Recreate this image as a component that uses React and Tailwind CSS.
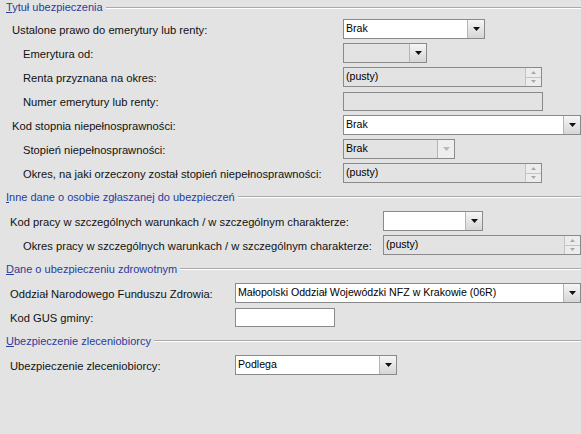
import React from "react";

const font = { fontFamily: '"Liberation Sans", Arial, sans-serif' };

function Section({ title, first }) {
  return (
    <div className={`flex items-center pl-[6px] ${first ? "h-[15px] mb-[2px]" : "h-6"}`}>
      <span className="text-[11px] text-[#2a3c9c] leading-none whitespace-nowrap">
        <span className="underline">{title[0]}</span>
        {title.slice(1)}
      </span>
      <div className="flex-1 ml-[3px] border-t border-[#a9a9a9] border-b border-b-white" />
    </div>
  );
}

function Arrow({ disabled }) {
  return (
    <svg width="7" height="4" viewBox="0 0 7 4">
      <path d="M0 0h7L3.5 4z" fill={disabled ? "#b8b8b8" : "#111"} />
    </svg>
  );
}

function Combo({ value, w, white = true, disabled, btnDisabled }) {
  return (
    <div
      className={`flex h-[20px] border border-[#8a8a8a] ${white ? "bg-white" : "bg-[#e3e3e3]"}`}
      style={{ width: w }}
    >
      <div className="flex-1 flex items-center pl-[2px] text-[10.6px] text-black whitespace-nowrap overflow-hidden">
        {value}
      </div>
      <div
        className={`w-[17px] flex items-center justify-center border-l border-[#b5b5b5] ${
          btnDisabled ? "bg-[#eeeeee]" : "bg-gradient-to-b from-[#f6f6f6] to-[#d6d6d6]"
        }`}
      >
        <Arrow disabled={btnDisabled || disabled} />
      </div>
    </div>
  );
}

function Spin({ value, w }) {
  return (
    <div className="flex h-[20px] border border-[#8a8a8a] bg-[#e3e3e3]" style={{ width: w }}>
      <div className="flex-1 flex items-center pl-[2px] text-[10.6px] text-black">{value}</div>
      <div className="w-[16px] flex flex-col border-l border-[#c4c4c4]">
        <div className="flex-1 flex items-center justify-center border-b border-[#c4c4c4] bg-[#ececec]">
          <svg width="5" height="3" viewBox="0 0 5 3">
            <path d="M0 3h5L2.5 0z" fill="#a8a8a8" />
          </svg>
        </div>
        <div className="flex-1 flex items-center justify-center bg-[#ececec]">
          <svg width="5" height="3" viewBox="0 0 5 3">
            <path d="M0 0h5L2.5 3z" fill="#a8a8a8" />
          </svg>
        </div>
      </div>
    </div>
  );
}

function Edit({ w, white }) {
  return (
    <div
      className={`h-[19px] border border-[#8a8a8a] ${white ? "bg-white" : "bg-[#e3e3e3]"}`}
      style={{ width: w }}
    />
  );
}

function Row({ label, indent, col, children }) {
  return (
    <div className="flex items-center h-6">
      <div
        className="text-[11.2px] text-[#111] whitespace-nowrap shrink-0 pt-[2px]"
        style={{ width: col, paddingLeft: indent }}
      >
        {label}
      </div>
      {children}
    </div>
  );
}

export default function App() {
  return (
    <div className="w-[581px] h-[434px] bg-[#e3e3e3] overflow-hidden" style={font}>
      <Section title="Tytuł ubezpieczenia" first />
      <Row label="Ustalone prawo do emerytury lub renty:" indent={12} col={343}>
        <Combo value="Brak" w={142} />
      </Row>
      <Row label="Emerytura od:" indent={23} col={343}>
        <Combo value="" w={84} white={false} />
      </Row>
      <Row label="Renta przyznana na okres:" indent={23} col={343}>
        <Spin value="(pusty)" w={199} />
      </Row>
      <Row label="Numer emerytury lub renty:" indent={23} col={343}>
        <Edit w={200} />
      </Row>
      <Row label="Kod stopnia niepełnosprawności:" indent={12} col={343}>
        <div className="flex-1">
          <Combo value="Brak" w={238} />
        </div>
      </Row>
      <Row label="Stopień niepełnosprawności:" indent={23} col={343}>
        <Combo value="Brak" w={112} white={false} btnDisabled />
      </Row>
      <Row label="Okres, na jaki orzeczony został stopień niepełnosprawności:" indent={23} col={343}>
        <Spin value="(pusty)" w={199} />
      </Row>

      <Section title="Inne dane o osobie zgłaszanej do ubezpieczeń" />
      <Row label="Kod pracy w szczególnych warunkach / w szczególnym charakterze:" indent={10} col={383}>
        <Combo value="" w={100} />
      </Row>
      <Row label="Okres pracy w szczególnych warunkach / w szczególnym charakterze:" indent={23} col={383}>
        <Spin value="(pusty)" w={198} />
      </Row>

      <Section title="Dane o ubezpieczeniu zdrowotnym" />
      <Row label="Oddział Narodowego Funduszu Zdrowia:" indent={10} col={235}>
        <Combo value="Małopolski Oddział Wojewódzki NFZ w Krakowie (06R)" w={346} />
      </Row>
      <Row label="Kod GUS gminy:" indent={10} col={235}>
        <Edit w={100} white />
      </Row>

      <Section title="Ubezpieczenie zleceniobiorcy" />
      <Row label="Ubezpieczenie zleceniobiorcy:" indent={10} col={235}>
        <Combo value="Podlega" w={162} />
      </Row>
    </div>
  );
}
